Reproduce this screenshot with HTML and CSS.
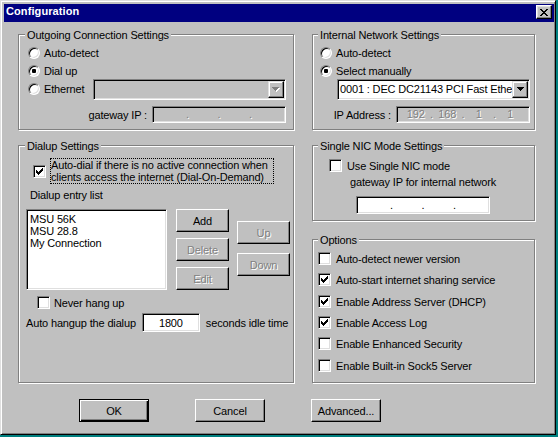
FILE: index.html
```html
<!DOCTYPE html>
<html lang="en">
<head>
<meta charset="utf-8">
<title>Configuration</title>
<link rel="stylesheet" href="styles.css">
</head>
<body>
<div class="window">
  <div class="titlebar">
    <span class="title">Configuration</span>
    <button class="close-btn" aria-label="Close">
      <svg width="8" height="7" viewBox="0 0 8 7" shape-rendering="crispEdges"><path fill="#000" d="M0 0h2v1H0zM6 0h2v1H6zM1 1h2v1H1zM5 1h2v1H5zM2 2h4v1H2zM3 3h2v1H3zM2 4h4v1H2zM1 5h2v1H1zM5 5h2v1H5zM0 6h2v1H0zM6 6h2v1H6z"/></svg>
    </button>
  </div>

  <div class="content">
    <div class="col">
      <section class="group g-out">
        <div class="legend"><span>Outgoing Connection Settings</span></div>
        <div class="gbody">
          <div class="opt"><span class="radio"></span>Auto-detect</div>
          <div class="opt"><span class="radio on"></span>Dial up</div>
          <div class="opt"><span class="radio"></span>Ethernet
            <div class="combo disabled eth">
              <div class="combo-text"></div>
              <div class="combo-btn"><svg width="8" height="5" viewBox="0 0 8 5" shape-rendering="crispEdges"><path fill="#fff" d="M1 1h7v1H1zM2 2h5v1H2zM3 3h3v1H3zM4 4h1v1H4z"/><path fill="#808080" d="M0 0h7v1H0zM1 1h5v1H1zM2 2h3v1H2zM3 3h1v1H3z"/></svg></div>
            </div>
          </div>
          <div class="iprow">
            <span class="lbl">gateway IP :</span>
            <div class="ip disabled"><span class="seg"></span><span class="dot">.</span><span class="seg"></span><span class="dot">.</span><span class="seg"></span><span class="dot">.</span><span class="seg"></span></div>
          </div>
        </div>
      </section>

      <section class="group g-dial">
        <div class="legend"><span>Dialup Settings</span></div>
        <div class="gbody">
          <div class="autodial">
            <span class="check"><svg width="7" height="7" viewBox="0 0 7 7" shape-rendering="crispEdges"><path fill="#000" d="M0 2h1v3H0zM1 3h1v3H1zM2 4h1v3H2zM3 3h1v3H3zM4 2h1v3H4zM5 1h1v3H5zM6 0h1v3H6z"/></svg></span>
            <span class="focus-label">Auto-dial if there is no active connection when<br>clients access the internet (Dial-On-Demand)</span>
          </div>
          <div class="entry-title">Dialup entry list</div>
          <div class="listarea">
            <div class="listbox">
              <div>MSU 56K</div>
              <div>MSU 28.8</div>
              <div>My Connection</div>
            </div>
            <div class="btncol col-a">
              <button class="btn small">Add</button>
              <button class="btn small" disabled>Delete</button>
              <button class="btn small" disabled>Edit</button>
            </div>
            <div class="btncol col-b">
              <button class="btn small" disabled>Up</button>
              <button class="btn small" disabled>Down</button>
            </div>
          </div>
          <div class="neverrow"><span class="check"></span>Never hang up</div>
          <div class="hangrow">
            <span>Auto hangup the dialup</span>
            <input class="edit" type="text" value="1800">
            <span>seconds idle time</span>
          </div>
        </div>
      </section>
    </div>

    <div class="col right">
      <section class="group g-int">
        <div class="legend"><span>Internal Network Settings</span></div>
        <div class="gbody">
          <div class="opt"><span class="radio"></span>Auto-detect</div>
          <div class="opt"><span class="radio on"></span>Select manually</div>
          <div class="opt">
            <div class="combo nic">
              <div class="combo-text">0001 : DEC DC21143 PCI Fast Ethe</div>
              <div class="combo-btn"><svg width="7" height="4" viewBox="0 0 7 4" shape-rendering="crispEdges"><path fill="#000" d="M0 0h7v1H0zM1 1h5v1H1zM2 2h3v1H2zM3 3h1v1H3z"/></svg></div>
            </div>
          </div>
          <div class="iprow">
            <span class="lbl">IP Address :</span>
            <div class="ip disabled"><span class="seg">192</span><span class="dot">.</span><span class="seg">168</span><span class="dot">.</span><span class="seg">1</span><span class="dot">.</span><span class="seg">1</span></div>
          </div>
        </div>
      </section>

      <section class="group g-nic">
        <div class="legend"><span>Single NIC Mode Settings</span></div>
        <div class="gbody">
          <div class="nicrow"><span class="check"></span>Use Single NIC mode</div>
          <div class="nic-lbl">gateway IP for internal network</div>
          <div class="ip nic-ip"><span class="seg"></span><span class="dot">.</span><span class="seg"></span><span class="dot">.</span><span class="seg"></span><span class="dot">.</span><span class="seg"></span></div>
        </div>
      </section>

      <section class="group g-opt">
        <div class="legend"><span>Options</span></div>
        <div class="gbody">
          <div class="chkrow"><span class="check"></span>Auto-detect newer version</div>
          <div class="chkrow"><span class="check"><svg width="7" height="7" viewBox="0 0 7 7" shape-rendering="crispEdges"><path fill="#000" d="M0 2h1v3H0zM1 3h1v3H1zM2 4h1v3H2zM3 3h1v3H3zM4 2h1v3H4zM5 1h1v3H5zM6 0h1v3H6z"/></svg></span>Auto-start internet sharing service</div>
          <div class="chkrow"><span class="check"><svg width="7" height="7" viewBox="0 0 7 7" shape-rendering="crispEdges"><path fill="#000" d="M0 2h1v3H0zM1 3h1v3H1zM2 4h1v3H2zM3 3h1v3H3zM4 2h1v3H4zM5 1h1v3H5zM6 0h1v3H6z"/></svg></span>Enable Address Server (DHCP)</div>
          <div class="chkrow"><span class="check"><svg width="7" height="7" viewBox="0 0 7 7" shape-rendering="crispEdges"><path fill="#000" d="M0 2h1v3H0zM1 3h1v3H1zM2 4h1v3H2zM3 3h1v3H3zM4 2h1v3H4zM5 1h1v3H5zM6 0h1v3H6z"/></svg></span>Enable Access Log</div>
          <div class="chkrow"><span class="check"></span>Enable Enhanced Security</div>
          <div class="chkrow"><span class="check"></span>Enable Built-in Sock5 Server</div>
        </div>
      </section>
    </div>
  </div>

  <div class="buttons">
    <button class="btn wide default">OK</button>
    <button class="btn wide">Cancel</button>
    <button class="btn wide">Advanced...</button>
  </div>
</div>
</body>
</html>
```

FILE: styles.css
```css
* { box-sizing: border-box; }
html, body { margin: 0; padding: 0; }
body {
  width: 558px;
  height: 437px;
  overflow: hidden;
  background: #008080;
  font-family: "Liberation Sans", Arial, sans-serif;
  font-size: 11px;
  letter-spacing: -0.15px;
  color: #000;
}

.window {
  width: 556px;
  height: 435px;
  background: #c0c0c0;
  border: 1px solid;
  border-color: #dfdfdf #000 #000 #dfdfdf;
  box-shadow: inset 1px 1px #fff, inset -1px -1px #808080;
  padding: 3px 1px 3px 3px;
}

/* title bar */
.titlebar {
  height: 18px;
  background: #000080;
  display: flex;
  justify-content: space-between;
  align-items: flex-start;
  padding: 0 2px;
}
.title {
  color: #fff;
  font-weight: bold;
  line-height: 15px;
  letter-spacing: 0.1px;
}
.close-btn {
  width: 16px;
  height: 14px;
  margin-top: 1px;
  padding: 0;
  background: #c0c0c0;
  border: 1px solid;
  border-color: #fff #000 #000 #fff;
  box-shadow: inset -1px -1px #808080, inset 1px 1px #dfdfdf;
  display: flex;
  align-items: center;
  justify-content: center;
}
.close-btn svg { display: block; }

/* columns */
.content {
  display: grid;
  grid-template-columns: 276px 223px;
  column-gap: 18px;
  padding: 12px 0 0 14px;
}

/* group boxes */
.group {
  border: 1px solid #808080;
  box-shadow: 1px 1px 0 #fff, inset 1px 1px 0 #fff;
}
.legend {
  height: 13px;
  line-height: 13px;
  margin: -6px 0 0 6px;
  white-space: nowrap;
}
.right .legend { margin-left: 5px; }
.legend span {
  background: #c0c0c0;
  padding: 0 2px;
}
.g-out, .g-int { height: 96px; }
.g-dial { height: 238px; margin-top: 15px; }
.g-nic { height: 76px; margin-top: 15px; }
.g-opt { height: 144px; margin-top: 18px; }

.g-out .gbody { padding: 2px 7px 0 9px; }
.g-int .gbody { padding: 2px 4px 0 7px; }
.g-dial .gbody { padding: 0 0 0 7px; }

/* radio rows */
.opt {
  display: flex;
  align-items: center;
  height: 18px;
  line-height: 18px;
  white-space: nowrap;
}
.radio {
  flex: none;
  width: 12px;
  height: 12px;
  margin-right: 4px;
  border-radius: 50%;
  border: 1px solid;
  border-color: #808080 #fff #fff #808080;
  box-shadow: inset 1px 1px #000, inset -1px -1px #dfdfdf;
  background: #fff;
  display: flex;
  align-items: center;
  justify-content: center;
}
.radio.on::after {
  content: "";
  width: 4px;
  height: 4px;
  border-radius: 1px;
  background: #000;
}

/* sunken fields */
.combo, .ip, .listbox, .edit {
  border: 1px solid;
  border-color: #808080 #fff #fff #808080;
  box-shadow: inset 1px 1px #000, inset -1px -1px #dfdfdf;
  background: #fff;
}
.combo {
  display: flex;
  width: 193px;
  height: 21px;
  padding: 1px;
}
.combo.disabled { background: #c0c0c0; }
.combo.eth { margin-left: auto; }
.combo.nic { margin-left: 17px; }
.combo-text {
  flex: 1;
  min-width: 0;
  overflow: hidden;
  white-space: nowrap;
  padding-left: 1px;
  line-height: 17px;
}
.combo-btn {
  flex: none;
  width: 16px;
  height: 17px;
  background: #c0c0c0;
  border: 1px solid;
  border-color: #dfdfdf #000 #000 #dfdfdf;
  box-shadow: inset -1px -1px #808080, inset 1px 1px #fff;
  display: flex;
  align-items: center;
  justify-content: center;
}
.combo-btn svg { display: block; }

.iprow {
  display: flex;
  justify-content: flex-end;
  align-items: center;
  margin-top: 8px;
  white-space: nowrap;
}
.iprow .lbl { margin-right: 5px; }
.ip {
  display: flex;
  align-items: center;
  width: 134px;
  height: 17px;
  padding-left: 5px;
  line-height: 13px;
}
.ip.disabled {
  background: #c0c0c0;
  color: #808080;
  text-shadow: 1px 1px 0 #fff;
}
.ip .seg { width: 27.5px; text-align: center; flex: none; }
.ip .dot { width: 4px; text-align: center; flex: none; }

/* checkboxes */
.check {
  flex: none;
  width: 13px;
  height: 13px;
  border: 1px solid;
  border-color: #808080 #fff #fff #808080;
  box-shadow: inset 1px 1px #000, inset -1px -1px #dfdfdf;
  background: #fff;
  display: flex;
  align-items: center;
  justify-content: center;
}
.check svg { display: block; }

/* dialup */
.autodial {
  display: flex;
  align-items: center;
  margin-top: 5px;
}
.autodial .check { margin: 0 4px 0 7px; }
.focus-label {
  border: 1px dotted #000;
  line-height: 12px;
  width: 224px;
  white-space: nowrap;
}
.entry-title {
  margin: 5px 0 0 4px;
  line-height: 13px;
}
.listarea {
  display: flex;
  align-items: flex-start;
  margin-top: 7px;
}
.listbox {
  width: 141px;
  height: 81px;
  padding: 3px 3px;
  line-height: 12px;
  white-space: nowrap;
}
.btncol {
  display: flex;
  flex-direction: column;
}
.col-a { margin-left: 9px; gap: 6px; }
.col-b { margin-left: 8px; margin-top: 12px; gap: 9px; }

.btn {
  font: inherit;
  letter-spacing: inherit;
  color: #000;
  padding: 0;
  height: 23px;
  background: #c0c0c0;
  border: 1px solid;
  border-color: #fff #000 #000 #fff;
  box-shadow: inset -1px -1px #808080;
}
.btn.small { width: 53px; }
.btn.wide { width: 70px; }
.btn:disabled {
  color: #808080;
  text-shadow: 1px 1px 0 #fff;
}
.btn.default {
  border-color: #000;
  box-shadow: inset 1px 1px #fff, inset -1px -1px #000, inset -2px -2px #808080;
}

.neverrow {
  display: flex;
  align-items: center;
  height: 17px;
  margin-top: 4px;
}
.neverrow .check { margin: 0 4px 0 11px; }

.hangrow {
  display: flex;
  align-items: center;
  margin-top: 2px;
  white-space: nowrap;
}
.edit {
  font: inherit;
  letter-spacing: inherit;
  color: #000;
  width: 58px;
  height: 19px;
  padding: 0;
  margin: 0 6px;
  text-align: center;
  outline: none;
}

/* single nic */
.nicrow {
  display: flex;
  align-items: center;
  height: 17px;
  margin-top: 4px;
}
.nicrow .check { margin: 0 5px 0 16px; }
.nic-lbl {
  margin: 2px 0 0 37px;
  line-height: 13px;
}
.nic-ip {
  margin: 7px 0 0 43px;
  height: 18px;
}

/* options */
.g-opt .gbody { padding-top: 1px; }
.chkrow {
  display: flex;
  align-items: center;
  height: 21px;
  white-space: nowrap;
}
.chkrow:nth-child(3n) { margin-top: 1px; }
.chkrow .check { margin: 0 5px 0 5px; }

/* bottom buttons */
.buttons {
  display: flex;
  gap: 46px;
  margin-top: 16px;
  padding-left: 75px;
}
```
